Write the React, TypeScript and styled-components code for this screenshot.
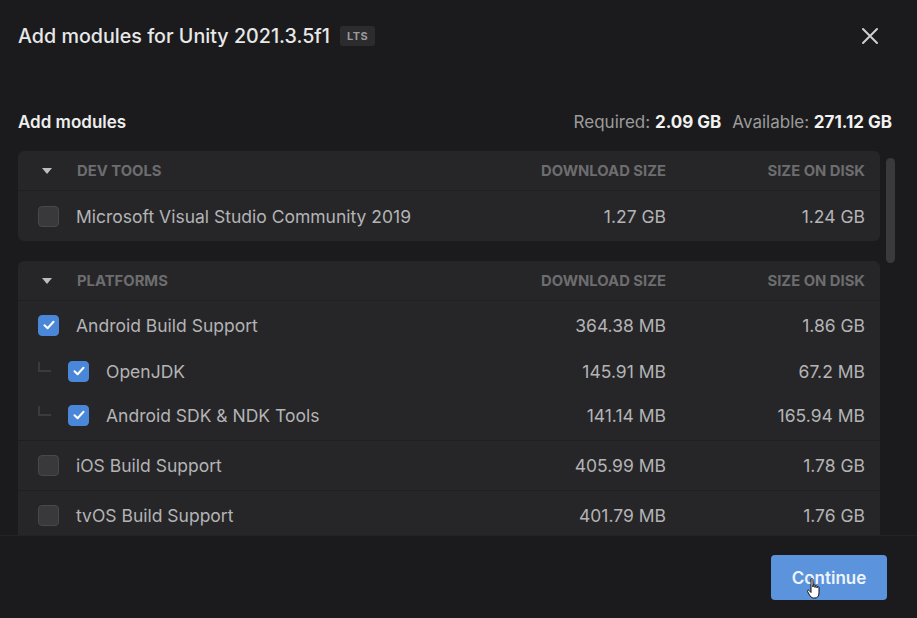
import React from 'react';
import styled, { createGlobalStyle } from 'styled-components';

const GlobalStyle = createGlobalStyle`
    html, body {
        margin: 0;
        padding: 0;
        background: #1b1b1d;
    }
    body {
        font-family: Inter, 'Noto Sans', sans-serif;
        -webkit-font-smoothing: antialiased;
    }
`;

interface IModule {
    name: string,
    download: string,
    disk: string,
    checked?: boolean,
    children?: IModule[],
}

interface IGroup {
    title: string,
    modules: IModule[],
}

const groups: IGroup[] = [
    {
        title: 'Dev tools',
        modules: [
            { name: 'Microsoft Visual Studio Community 2019', download: '1.27 GB', disk: '1.24 GB' },
        ],
    },
    {
        title: 'Platforms',
        modules: [
            {
                name: 'Android Build Support', download: '364.38 MB', disk: '1.86 GB', checked: true,
                children: [
                    { name: 'OpenJDK', download: '145.91 MB', disk: '67.2 MB', checked: true },
                    { name: 'Android SDK & NDK Tools', download: '141.14 MB', disk: '165.94 MB', checked: true },
                ],
            },
            { name: 'iOS Build Support', download: '405.99 MB', disk: '1.78 GB' },
            { name: 'tvOS Build Support', download: '401.79 MB', disk: '1.76 GB' },
        ],
    },
];

const Dialog = styled.div`
    width: 917px;
    height: 618px;
    display: flex;
    flex-direction: column;
    background: #1b1b1d;
    color: #e6e6e6;
    overflow: hidden;
    position: relative;
`;

const Header = styled.div`
    height: 72px;
    padding: 0 37px 0 18px;
    display: flex;
    align-items: center;
    justify-content: space-between;
`;

const Title = styled.h1`
    margin: 0;
    font-size: 19.7px;
    font-weight: 500;
    color: #e8e8e8;
    display: flex;
    align-items: center;
    gap: 10px;
`;

const Badge = styled.span`
    font-size: 11px;
    font-weight: 700;
    letter-spacing: 0.5px;
    color: #9a9a9a;
    background: #2c2c2e;
    border-radius: 3px;
    padding: 4px 7px;
    line-height: 12px;
`;

const CloseButton = styled.button`
    background: none;
    border: none;
    padding: 0;
    width: 20px;
    height: 20px;
    display: flex;
    align-items: center;
    justify-content: center;
    cursor: pointer;
`;

const SummaryBar = styled.div`
    margin-top: 35px;
    padding: 0 25px 0 18px;
    display: flex;
    align-items: center;
    justify-content: space-between;
    height: 30px;
`;

const Subtitle = styled.h2`
    margin: 0;
    font-size: 17px;
    font-weight: 600;
    color: #eeeeee;
`;

const Stats = styled.div`
    font-size: 17px;
    color: #9b9b9b;
    display: flex;
    gap: 11px;

    b {
        color: #f2f2f2;
        font-weight: 700;
    }
`;

const ScrollArea = styled.div`
    position: relative;
    margin-top: 14px;
    height: 384px;
    overflow: hidden;
    padding: 0 37px 0 18px;
    display: flex;
    flex-direction: column;
    gap: 20px;
`;

const ScrollThumb = styled.div`
    position: absolute;
    top: 7px;
    right: 22px;
    width: 9px;
    height: 105px;
    border-radius: 5px;
    background: #3a3a3c;
`;

const Group = styled.section`
    background: #262628;
    border-radius: 6px;
    flex-shrink: 0;
`;

const Grid = styled.div`
    display: grid;
    grid-template-columns: 1fr 160px 199px;
    align-items: center;
    padding-right: 15px;
`;

const GroupHeader = styled(Grid)`
    height: 39px;
    border-bottom: 1px solid #1f1f21;
    font-size: 14.8px;
    font-weight: 700;
    color: #6d6d6f;
    text-transform: uppercase;
`;

const HeaderName = styled.div`
    display: flex;
    align-items: center;
    gap: 25px;
    padding-left: 24px;
`;

const Caret = styled.span`
    width: 0;
    height: 0;
    border-left: 5.5px solid transparent;
    border-right: 5.5px solid transparent;
    border-top: 6px solid #bdbdbd;
    margin-top: 1px;
`;

const Right = styled.div`
    text-align: right;
`;

const ModuleBlock = styled.div<{ $padBottom?: boolean }>`
    border-bottom: 1px solid #1f1f21;
    padding-bottom: ${props => (props.$padBottom ? '3px' : '0')};

    &:last-child {
        border-bottom: none;
    }
`;

const Row = styled(Grid)<{ $height: number }>`
    height: ${props => props.$height}px;
    font-size: 17.5px;
    color: #b4b4b6;
`;

const NameCell = styled.div`
    display: flex;
    align-items: center;
    padding-left: 20px;
    gap: 17px;
`;

const Connector = styled.span`
    width: 13px;
    height: 10px;
    border-left: 2px solid #3b3b3d;
    border-bottom: 2px solid #3b3b3d;
    margin: -8px 0 0 0;
    box-sizing: border-box;
`;

const Box = styled.span<{ $checked?: boolean }>`
    width: 21px;
    height: 21px;
    border-radius: 4px;
    box-sizing: border-box;
    flex-shrink: 0;
    display: flex;
    align-items: center;
    justify-content: center;
    background: ${props => (props.$checked ? '#4a87d8' : '#39393b')};
    border: 1px solid ${props => (props.$checked ? '#4a87d8' : '#48484a')};
`;

const Footer = styled.div`
    flex: 1;
    border-top: 1px solid #232325;
    display: flex;
    justify-content: flex-end;
    align-items: flex-start;
    padding: 19px 30px 0 0;
`;

const PrimaryButton = styled.button`
    width: 116px;
    height: 45px;
    border: none;
    border-radius: 4px;
    background: #5b93dc;
    color: #eef4fc;
    font-family: Inter, sans-serif;
    font-size: 17px;
    font-weight: 600;
    cursor: pointer;
    position: relative;
`;

const Pointer = styled.svg`
    position: absolute;
    left: 35px;
    top: 22px;
`;

const Checkbox = ({ checked }: { checked?: boolean }) => (
    <Box $checked={checked}>
        {checked && (
            <svg width='14' height='14' viewBox='0 0 14 14'>
                <path d='M2.5 7.3 L5.6 10.2 L11.5 3.8' fill='none' stroke='#fff' strokeWidth='2' strokeLinecap='round' strokeLinejoin='round' />
            </svg>
        )}
    </Box>
);

const ModuleRow = ({ mod, child, height }: { mod: IModule, child?: boolean, height: number }) => (
    <Row $height={height}>
        <NameCell>
            {child && <Connector />}
            <Checkbox checked={mod.checked} />
            <span>{mod.name}</span>
        </NameCell>
        <Right>{mod.download}</Right>
        <Right>{mod.disk}</Right>
    </Row>
);

const App = () => {
    return (
        <Dialog>
            <GlobalStyle />
            <Header>
                <Title>
                    Add modules for Unity 2021.3.5f1
                    <Badge>LTS</Badge>
                </Title>
                <CloseButton aria-label='Close'>
                    <svg width='18' height='18' viewBox='0 0 18 18'>
                        <path d='M2 2 L16 16 M16 2 L2 16' stroke='#cfcfcf' strokeWidth='2' strokeLinecap='round' />
                    </svg>
                </CloseButton>
            </Header>
            <SummaryBar>
                <Subtitle>Add modules</Subtitle>
                <Stats>
                    <span>Required: <b>2.09 GB</b></span>
                    <span>Available: <b>271.12 GB</b></span>
                </Stats>
            </SummaryBar>
            <ScrollArea>
                {groups.map((group, i) => (
                    <Group key={i}>
                        <GroupHeader>
                            <HeaderName>
                                <Caret />
                                {group.title}
                            </HeaderName>
                            <Right>Download size</Right>
                            <Right>Size on disk</Right>
                        </GroupHeader>
                        {group.modules.map((mod, j) => (
                            <ModuleBlock key={j} $padBottom={!!mod.children}>
                                <ModuleRow
                                    mod={mod}
                                    height={mod.children ? 48 : i === 0 ? 50 : 49}
                                />
                                {mod.children && mod.children.map((c, k) => (
                                    <ModuleRow key={k} mod={c} child height={44} />
                                ))}
                            </ModuleBlock>
                        ))}
                    </Group>
                ))}
                <ScrollThumb />
            </ScrollArea>
            <Footer>
                <PrimaryButton>
                    Continue
                    <Pointer width='18' height='24' viewBox='0 0 18 24'>
                        <path
                            d='M5 2.5 C5 1.4 7 1.4 7 2.5 V10 V8.5 C7 7.4 9 7.4 9 8.5 V10.5 V9.5 C9 8.4 11 8.4 11 9.5 V11 V10.5 C11 9.4 13 9.4 13 10.5 V16 C13 19 11.5 21 9 21 H7.5 C5.5 21 4.5 19.5 3.5 18 L1.5 14.5 C1 13.5 2.3 12.6 3 13.4 L5 15.5 Z'
                            fill='#ffffff'
                            stroke='#111111'
                            strokeWidth='1'
                            strokeLinejoin='round'
                        />
                    </Pointer>
                </PrimaryButton>
            </Footer>
        </Dialog>
    );
};

export default App;
